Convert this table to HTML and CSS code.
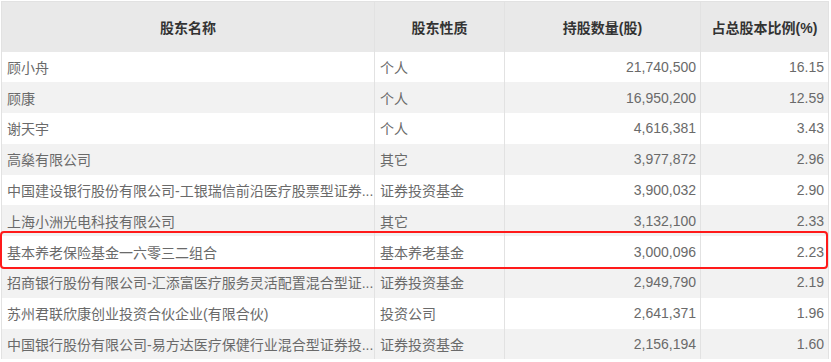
FILE: index.html
```html
<!DOCTYPE html>
<html lang="zh-CN">
<head>
<meta charset="utf-8">
<title>十大股东</title>
<link rel="stylesheet" href="styles.css">
</head>
<body>
<div class="wrap">
  <table class="holders">
    <colgroup>
      <col class="c-name">
      <col class="c-type">
      <col class="c-num">
      <col class="c-pct">
    </colgroup>
    <thead>
      <tr>
        <th>股东名称</th>
        <th>股东性质</th>
        <th>持股数量(股)</th>
        <th>占总股本比例(%)</th>
      </tr>
    </thead>
    <tbody>
      <tr><td>顾小舟</td><td>个人</td><td class="num">21,740,500</td><td class="num">16.15</td></tr>
      <tr><td>顾康</td><td>个人</td><td class="num">16,950,200</td><td class="num">12.59</td></tr>
      <tr><td>谢天宇</td><td>个人</td><td class="num">4,616,381</td><td class="num">3.43</td></tr>
      <tr><td>高燊有限公司</td><td>其它</td><td class="num">3,977,872</td><td class="num">2.96</td></tr>
      <tr><td>中国建设银行股份有限公司-工银瑞信前沿医疗股票型证券...</td><td>证券投资基金</td><td class="num">3,900,032</td><td class="num">2.90</td></tr>
      <tr><td>上海小洲光电科技有限公司</td><td>其它</td><td class="num">3,132,100</td><td class="num">2.33</td></tr>
      <tr><td>基本养老保险基金一六零三二组合</td><td>基本养老基金</td><td class="num">3,000,096</td><td class="num">2.23</td></tr>
      <tr><td>招商银行股份有限公司-汇添富医疗服务灵活配置混合型证...</td><td>证券投资基金</td><td class="num">2,949,790</td><td class="num">2.19</td></tr>
      <tr><td>苏州君联欣康创业投资合伙企业(有限合伙)</td><td>投资公司</td><td class="num">2,641,371</td><td class="num">1.96</td></tr>
      <tr><td>中国银行股份有限公司-易方达医疗保健行业混合型证券投...</td><td>证券投资基金</td><td class="num">2,156,194</td><td class="num">1.60</td></tr>
    </tbody>
  </table>
  <div class="highlight"></div>
</div>
</body>
</html>
```
FILE: styles.css
```css
html, body {
  margin: 0;
  padding: 0;
  background: #ffffff;
}

.wrap {
  position: relative;
  padding: 1px 0 0 1px;
  width: 830px;
}

.holders {
  width: 827px;
  border-collapse: collapse;
  table-layout: fixed;
  font-family: "Liberation Sans", "Noto Sans CJK SC", sans-serif;
  font-size: 14px;
  color: #6a6a6a;
}

.c-name { width: 373px; }
.c-type { width: 130px; }
.c-num  { width: 196px; }
.c-pct  { width: 128px; }

.holders th {
  height: 50px;
  padding: 0 5px;
  background: #e9e9e9;
  color: #333333;
  font-weight: bold;
  text-align: center;
  border: 1px solid #e2e2e2;
  border-bottom: none;
  box-sizing: border-box;
}

.holders td {
  height: 30.8px;
  padding: 0 5px;
  white-space: nowrap;
  overflow: hidden;
  border-left: 1px solid #e2e2e2;
  border-right: 1px solid #e2e2e2;
  box-sizing: border-box;
}

.holders tbody tr:nth-child(even) td {
  background: #f2f2f2;
}

.holders td.num {
  text-align: right;
  padding-right: 4px;
}

.highlight {
  position: absolute;
  left: 0;
  top: 231px;
  width: 828px;
  height: 38px;
  border: 2px solid #ff1a1a;
  border-radius: 4px;
  box-sizing: border-box;
  pointer-events: none;
}
```
